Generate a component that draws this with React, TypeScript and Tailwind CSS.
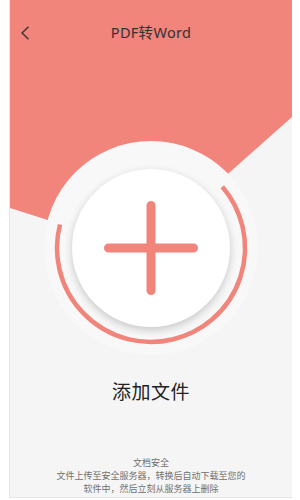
import React from 'react';

const PINK = '#f1847b';

const App: React.FC = () => {
  return (
    <div className="w-[300px] h-[500px] bg-white pl-[9px]" style={{ fontFamily: '"Noto Sans", "Noto Sans CJK SC", sans-serif' }}>
      <div className="relative w-[283px] h-[498px] bg-[#f5f5f5] border-l border-b border-[#e3e5ea] flex flex-col items-center overflow-hidden">
        {/* pink backdrop */}
        <svg className="absolute inset-0" width="282" height="498" viewBox="0 0 282 498">
          <polygon points="0,0 282,0 282,117 132,250 0,208" fill={PINK} />
        </svg>

        {/* header */}
        <div className="relative w-full h-[66px] flex items-center justify-center">
          <svg className="absolute left-[10px] top-[26px]" width="10" height="14" viewBox="0 0 10 14">
            <path d="M8.5 0.8 L2 7 L8.5 13.2" fill="none" stroke="#333" strokeWidth="1.3" />
          </svg>
          <span className="text-[14.5px] text-[#333] tracking-[0.3px]">PDF转Word</span>
        </div>

        {/* add button */}
        <div className="relative mt-[75px] w-[214px] h-[214px] rounded-full bg-[#f8f8f8] flex items-center justify-center">
          <svg className="absolute inset-0" width="214" height="214" viewBox="0 0 214 214">
            <path d="M178.3 45.7 A94 94 0 1 1 16 83.5" fill="none" stroke={PINK} strokeWidth="4.5" />
          </svg>
          <div className="relative w-[158px] h-[158px] rounded-full bg-white shadow-[0_3px_9px_rgba(0,0,0,0.2)] flex items-center justify-center">
            <svg width="94" height="94" viewBox="0 0 94 94">
              <path d="M47 4.5 V89.5 M4.5 47 H89.5" stroke={PINK} strokeWidth="9" strokeLinecap="round" />
            </svg>
          </div>
        </div>

        <div className="relative mt-[25px] text-[19px] leading-[24px] text-[#222] tracking-[0.5px]">添加文件</div>

        <div className="relative mt-auto mb-[2px] flex flex-col items-center text-[9px] leading-[13px] text-[#707070]">
          <span>文档安全</span>
          <span>文件上传至安全服务器，转换后自动下载至您的</span>
          <span>软件中，然后立刻从服务器上删除</span>
        </div>
      </div>
    </div>
  );
};

export default App;
